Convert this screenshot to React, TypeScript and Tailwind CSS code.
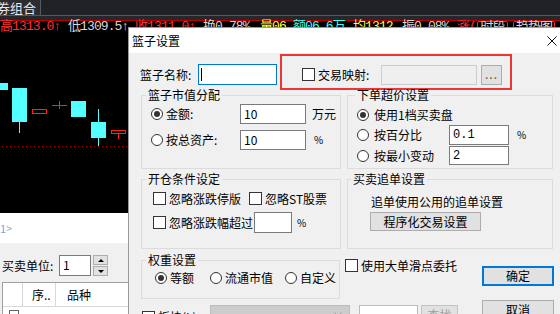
import React from "react";

const mono = "font-['Liberation_Mono','Noto_Sans_CJK_SC',monospace]";

function Radio({ checked }: { checked?: boolean }) {
  return (
    <span className="w-[12px] h-[12px] rounded-full border border-[#333] bg-white flex items-center justify-center shrink-0">
      {checked && <span className="w-[6px] h-[6px] rounded-full bg-[#333]" />}
    </span>
  );
}

function Check() {
  return <span className="w-[13px] h-[13px] border border-[#333] bg-white shrink-0" />;
}

function Group({
  title,
  legendClass,
  className,
  children,
}: {
  title: string;
  legendClass: string;
  className: string;
  children: React.ReactNode;
}) {
  return (
    <fieldset className={`border border-[#dcdcdc] ${className}`}>
      <legend className={`px-[2px] leading-[12px] text-[12px] text-black ${legendClass}`}>{title}</legend>
      {children}
    </fieldset>
  );
}

function Field({ value, className }: { value: string; className: string }) {
  return (
    <div className={`border border-[#7a7a7a] bg-white pl-[3px] text-[12px] leading-[18px] ${className}`}>{value}</div>
  );
}

function Candles() {
  // page y minus 33
  return (
    <svg width="560" height="180" className="block">
      <rect x="0" y="50" width="8" height="7" fill="#54ffff" />
      <rect x="12" y="55" width="15" height="34" fill="#54ffff" />
      <rect x="19" y="89" width="1" height="11" fill="#54ffff" />
      <rect x="32.5" y="76.5" width="14" height="4" fill="none" stroke="#ff2020" />
      <rect x="52" y="72" width="15" height="1" fill="#ff2020" />
      <rect x="59" y="68" width="1" height="8" fill="#ff2020" />
      <rect x="71" y="68" width="15" height="16" fill="#54ffff" />
      <rect x="98" y="76" width="1" height="37" fill="#54ffff" />
      <rect x="91" y="89" width="15" height="16" fill="#54ffff" />
      <rect x="111.5" y="97.5" width="14" height="3" fill="none" stroke="#ff2020" />
      <rect x="118" y="101" width="1" height="5" fill="#ff2020" />
      <line x1="2" y1="113.5" x2="127" y2="113.5" stroke="#b00000" strokeDasharray="1 3" />
    </svg>
  );
}

export default function App() {
  return (
    <div className="relative w-[560px] h-[314px] overflow-hidden bg-black font-['Noto_Sans_CJK_SC','Liberation_Sans',sans-serif] text-black">
      {/* top tab bar */}
      <div className="h-[16px] bg-[#202226] border-b border-[#55585c] flex">
        <div className="w-[41px] bg-[#2b2d32] border-r border-[#55585c] text-[#e8e8e8] text-[13px] leading-[16px] -indent-[3px] overflow-hidden whitespace-nowrap">
          券组合
        </div>
      </div>
      <div className="h-[4px] bg-[#26272b]" />
      <div className="h-[1px] bg-[#c00000]" />
      {/* quote row */}
      <div className={`h-[12px] flex items-center whitespace-nowrap text-[13px] leading-[12px] tracking-[-0.9px] ${mono}`}>
        <span className="w-[68px] text-[#ff3030]">高1313.0↑</span>
        <span className="w-[67px] text-[#d8d8d8]">低1309.5↑</span>
        <span className="w-[68px] text-[#ff3030]">收1311.0↑</span>
        <span className="w-[57px] text-[#d8d8d8]">换0.78%</span>
        <span className="w-[33px] text-[#ffff40]">量06</span>
        <span className="w-[60px] text-[#40ffff]">额06.6万</span>
        <span className="w-[49px] text-[#ffff40]">均1312</span>
        <span className="w-[55px] text-[#d8d8d8]">振0.08%</span>
        <span className="w-[20px] text-[#ff3030]">涨(</span>
        <span className="w-[31px] h-[12px] border border-[#e03030] rounded-[2px] text-[#d8d8d8] text-center">时段</span>
        <span className="ml-[5px] w-[42px] h-[12px] border border-[#e03030] rounded-[2px] text-[#d8d8d8] text-center">趋势图</span>
      </div>
      {/* chart */}
      <Candles />
      {/* white strip */}
      <div className="h-[30px] bg-white pt-[9px] text-[11px] leading-[12px] text-[#7aa6d8]">
        1<span className="text-[#9aaec4]">&gt;</span>
      </div>
      {/* lower panel */}
      <div className="h-[71px] bg-[#f0f0f0] pt-[12px]">
        <div className="flex items-center h-[21px] pl-[2px]">
          <span className="w-[57px] text-[12px] leading-[12px]">买卖单位:</span>
          <Field value="1" className="w-[32px] h-[21px]" />
          <div className="ml-[2px] w-[15px] h-[21px] flex flex-col gap-[1px]">
            <div className="flex-1 bg-[#e1e1e1] border border-[#adadad] flex items-center justify-center">
              <span className="w-0 h-0 border-l-[3px] border-r-[3px] border-b-[3px] border-l-transparent border-r-transparent border-b-black" />
            </div>
            <div className="flex-1 bg-[#e1e1e1] border border-[#adadad] flex items-center justify-center">
              <span className="w-0 h-0 border-l-[3px] border-r-[3px] border-t-[3px] border-l-transparent border-r-transparent border-t-black" />
            </div>
          </div>
        </div>
        <div className="mt-[6px] ml-[2px] bg-white border-t border-l border-[#a0a0a0]">
          <div className="flex h-[24px] border-b border-[#d8d8d8] text-[12px] items-center">
            <span className="w-[20px] h-full border-r border-[#d8d8d8]" />
            <span className="w-[33px] h-full border-r border-[#d8d8d8] pl-[9px] leading-[24px]">序..</span>
            <span className="pl-[11px] leading-[24px]">品种</span>
          </div>
          <div className="h-[10px] pl-[6px] pt-[3px]">
            <span className="block w-[10px] h-[10px] border border-[#666]" />
          </div>
        </div>
      </div>

      {/* dialog window */}
      <div className="absolute left-[128px] top-[27px] w-[447px] h-[300px] border-l border-t border-[#9a9a9a] bg-[#f0f0f0]">
        <div className="h-[25px] bg-white flex items-center justify-between pl-[3px] pr-[18px]">
          <span className="text-[12px] leading-[12px]">篮子设置</span>
          <svg width="10" height="10" viewBox="0 0 10 10">
            <path d="M0.5 0.5L9.5 9.5M9.5 0.5L0.5 9.5" stroke="#111" strokeWidth="1" />
          </svg>
        </div>
        <div className="pl-[12px] text-[12px] leading-[14px]">
          {/* row 1 */}
          <div className="mt-[1px] flex items-start -ml-[1px]">
            <div className="mt-[10px] flex items-center h-[21px]">
              <span className="w-[58px]">篮子名称:</span>
              <div className="relative w-[79px] h-[21px] border border-[#0078d7] bg-white">
                <span className="absolute left-[2px] top-[3px] w-[1px] h-[13px] bg-black" />
              </div>
            </div>
            <div className="ml-[3px] w-[232px] h-[36px] border-2 border-[#ee3535] flex items-center pt-[5px] pl-[20px]">
              <Check />
              <span className="ml-[3px] w-[63px]">交易映射:</span>
              <div className="w-[96px] h-[20px] bg-[#efefef] border border-[#cccccc]" />
              <div className="ml-[4px] w-[21px] h-[20px] bg-[#e1e1e1] border border-[#adadad] text-[#555] text-center leading-[16px] tracking-[1px]">
                ...
              </div>
            </div>
          </div>

          {/* groups */}
          <div className="-mt-[1px] grid grid-cols-[200px_206px] gap-x-[6px] gap-y-[4px]">
            <Group title="篮子市值分配" legendClass="ml-[4px]" className="h-[80px]">
              <div className="pt-[3px] pl-[9px] flex flex-col gap-[6px]">
                <div className="flex items-center h-[20px]">
                  <div className="w-[89px] flex items-center gap-[3px]">
                    <Radio checked />
                    <span>金额:</span>
                  </div>
                  <Field value="10" className="w-[66px] h-[20px]" />
                  <span className="ml-[6px]">万元</span>
                </div>
                <div className="flex items-center h-[20px]">
                  <div className="w-[89px] flex items-center gap-[3px]">
                    <Radio />
                    <span>按总资产:</span>
                  </div>
                  <Field value="10" className="w-[66px] h-[20px]" />
                  <span className="ml-[8px] text-[10px]">%</span>
                </div>
              </div>
            </Group>
            <Group title="下单超价设置" legendClass="ml-[7px]" className="h-[80px]">
              <div className="pl-[9px]">
                <div className="mt-[6px] h-[16px] flex items-center gap-[5px]">
                  <Radio checked />
                  <span>使用1档买卖盘</span>
                </div>
                <div className="mt-[2px] h-[20px] flex items-center">
                  <div className="w-[92px] flex items-center gap-[5px]">
                    <Radio />
                    <span>按百分比</span>
                  </div>
                  <Field value="0.1" className={`w-[60px] h-[20px] ${mono}`} />
                  <span className="ml-[8px] text-[10px]">%</span>
                </div>
                <div className="mt-[1px] h-[19px] flex items-center">
                  <div className="w-[92px] flex items-center gap-[5px]">
                    <Radio />
                    <span>按最小变动</span>
                  </div>
                  <Field value="2" className={`w-[60px] h-[19px] ${mono}`} />
                </div>
              </div>
            </Group>
            <Group title="开仓条件设定" legendClass="ml-[4px]" className="h-[76px]">
              <div className="pl-[11px]">
                <div className="mt-[6px] h-[15px] flex items-center">
                  <Check />
                  <span className="ml-[3px] w-[80px]">忽略涨跌停版</span>
                  <Check />
                  <span className="ml-[3px]">忽略ST股票</span>
                </div>
                <div className="mt-[6px] h-[21px] flex items-center">
                  <Check />
                  <span className="ml-[3px] w-[85px]">忽略涨跌幅超过</span>
                  <Field value="" className="w-[38px] h-[21px]" />
                  <span className="ml-[5px] text-[10px]">%</span>
                </div>
              </div>
            </Group>
            <Group title="买卖追单设置" legendClass="ml-[3px]" className="h-[76px]">
              <div className="pl-[22px]">
                <div className="mt-[9px] h-[16px] pl-[1px] flex items-center">追单使用公用的追单设置</div>
                <div className="mt-[2px] w-[111px] h-[19px] bg-[#e1e1e1] border border-[#adadad] text-center leading-[17px]">
                  程序化交易设置
                </div>
              </div>
            </Group>
          </div>

          {/* lower section */}
          <div className="mt-[5px] flex">
            <div className="w-[341px] flex flex-col">
              <div className="flex items-start">
                <Group title="权重设置" legendClass="ml-[4px]" className="w-[199px] h-[45px]">
                  <div className="mt-[5px] h-[14px] pl-[13px] flex items-center">
                    <Radio checked />
                    <span className="ml-[3px] w-[40px]">等额</span>
                    <Radio />
                    <span className="ml-[3px] w-[60px]">流通市值</span>
                    <Radio />
                    <span className="ml-[3px]">自定义</span>
                  </div>
                </Group>
                <div className="ml-[5px] mt-[5px] h-[13px] flex items-center whitespace-nowrap">
                  <Check />
                  <span className="ml-[3px]">使用大单滑点委托</span>
                </div>
              </div>
              <div className="mt-[6px] flex items-start whitespace-nowrap">
                <div className="w-[69px] flex items-center pt-[5px] pl-[1px]">
                  <Check />
                  <span className="ml-[3px]">板块(L)</span>
                </div>
                <div className="relative w-[140px] h-[20px] bg-[#cccccc] border border-[#bcbcbc]">
                  <svg className="absolute right-[7px] top-[6px]" width="8" height="5" viewBox="0 0 8 5">
                    <path d="M0.5 0.5L4 4L7.5 0.5" fill="none" stroke="#9a9a9a" />
                  </svg>
                </div>
                <div className="ml-[9px] w-[59px] h-[20px] bg-white border border-[#bcbcbc]" />
                <div className="ml-[3px] w-[37px] h-[20px] bg-[#e1e1e1] border border-[#c4c4c4] text-[#a0a0a0] text-center leading-[18px]">
                  查找
                </div>
              </div>
            </div>
            <div className="mt-[12px] flex flex-col gap-[14px]">
              <div className="w-[72px] h-[20px] bg-[#e1e1e1] border-2 border-[#0078d7] text-center leading-[16px]">确定</div>
              <div className="w-[72px] h-[20px] bg-[#e1e1e1] border border-[#adadad] text-center leading-[18px]">取消</div>
            </div>
          </div>
        </div>
      </div>
    </div>
  );
}
